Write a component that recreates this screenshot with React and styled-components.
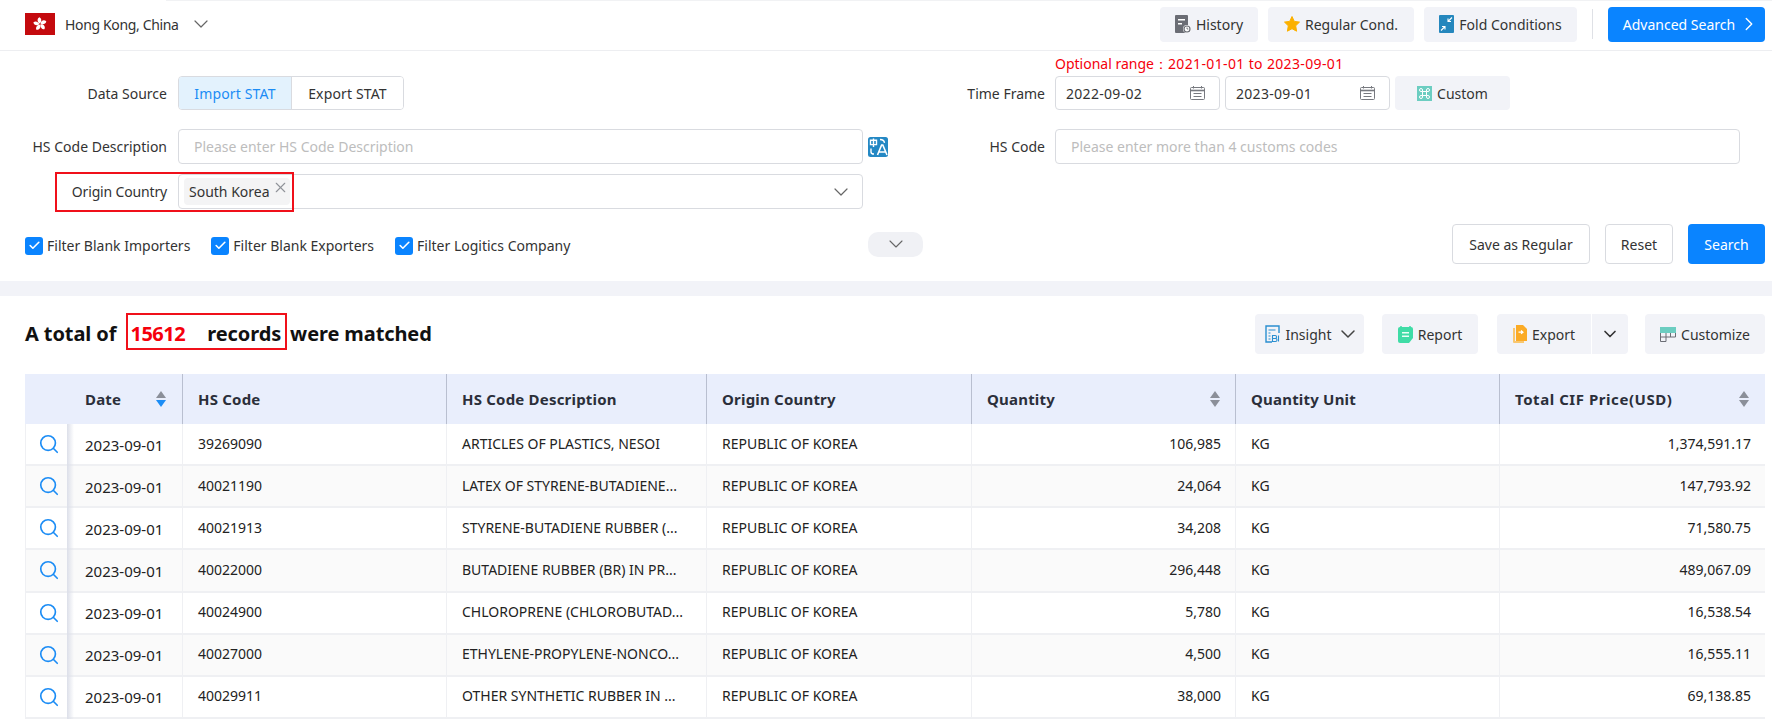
import React from "react";
import styled, { createGlobalStyle } from "styled-components";
import { ChevronDown, ChevronRight, Search as SearchIcon, X, Check } from "lucide-react";

const GlobalStyle = createGlobalStyle`
  html, body {
    margin: 0;
    padding: 0;
    background: #fff;
    font-family: "Noto Sans", "Open Sans", sans-serif;
    font-size: 14px;
    color: #222;
    overflow: hidden;
  }
  * { box-sizing: border-box; }
`;

const Page = styled.div`
  width: 1772px;
  height: 720px;
  overflow: hidden;
`;

/* top bar */
const TopBar = styled.div`
  height: 51px;
  display: flex;
  align-items: center;
  padding: 0 7px 2px 25px;
  border-bottom: 1px solid #edeef1;
  position: relative;
  &::before {
    content: "";
    position: absolute;
    top: 0;
    left: 166px;
    right: 0;
    height: 1px;
    background: #f1f2f4;
  }
`;

const Region = styled.div`
  display: flex;
  align-items: center;
  color: #333;
  flex: 1;
`;

const RegionName = styled.span`
  margin: 0 16px 0 10px;
  letter-spacing: -0.35px;
`;

const Caret = styled(ChevronDown)`
  margin: 0 -6px;
  flex: none;
  color: ${(p) => p.color || "#666"};
`;

const GreyButton = styled.div`
  height: ${(p) => p.$h || 35}px;
  width: ${(p) => p.$w}px;
  display: flex;
  align-items: center;
  justify-content: center;
  gap: 5px;
  background: #f2f3f8;
  border-radius: 4px;
  color: #333;
  white-space: nowrap;
`;

const TopActions = styled.div`
  display: flex;
  align-items: center;
  gap: 10px;
`;

const Divider = styled.div`
  width: 1px;
  height: 30px;
  background: #dfe1e6;
  margin: 0 5px;
`;

const PrimaryButton = styled.div`
  height: ${(p) => p.$h}px;
  width: ${(p) => p.$w}px;
  display: flex;
  align-items: center;
  justify-content: center;
  gap: 3px;
  padding-left: ${(p) => p.$pl || 0}px;
  background: #0a84ff;
  color: #fff;
  border-radius: 4px;
`;

/* filter panel */
const FilterPanel = styled.div`
  height: 230px;
  display: flex;
  flex-direction: column;
`;

const RangeHint = styled.div`
  height: 25px;
  padding: 4px 0 0 1055px;
  color: #f5000b;
  font-size: 14px;
  line-height: 18px;
`;

const RangeDates = styled.span`
  letter-spacing: 0.36px;
`;

const FormRow = styled.div`
  display: flex;
  align-items: center;
  height: ${(p) => p.$h}px;
  margin-bottom: ${(p) => p.$mb || 0}px;
  position: relative;
`;

const FieldLabel = styled.div`
  width: ${(p) => p.$w}px;
  margin-right: ${(p) => p.$mr}px;
  text-align: right;
  color: #333;
  white-space: nowrap;
  flex: none;
  letter-spacing: ${(p) => p.$ls || 0}px;
`;

const Segment = styled.div`
  display: flex;
  height: 34px;
  width: 226px;
  border: 1px solid #d9dbe0;
  border-radius: 4px;
  overflow: hidden;
`;

const SegmentItem = styled.div`
  display: flex;
  align-items: center;
  justify-content: center;
  width: ${(p) => p.$w}px;
  background: ${(p) => (p.$active ? "#e3f2fd" : "#fff")};
  color: ${(p) => (p.$active ? "#1b8cf5" : "#333")};
  border-left: ${(p) => (p.$active ? "none" : "1px solid #d9dbe0")};
  letter-spacing: 0.15px;
`;

const DateRow = styled.div`
  display: flex;
  gap: 5px;
`;

const DateBox = styled.div`
  width: 165px;
  height: 34px;
  border: 1px solid #d9dbe0;
  border-radius: 4px;
  display: flex;
  align-items: center;
  justify-content: space-between;
  padding: 0 14px 0 10px;
  color: #333;
  letter-spacing: 0.3px;
`;

const TextInput = styled.div`
  width: 685px;
  height: 35px;
  border: 1px solid #d9dbe0;
  border-radius: 4px;
  display: flex;
  align-items: center;
  padding-left: 15px;
  color: #bdbdbd;
`;

const SelectBox = styled.div`
  width: 685px;
  height: 35px;
  border: 1px solid #d9dbe0;
  border-radius: 4px;
  display: flex;
  align-items: center;
  justify-content: space-between;
  padding: 0 15px 0 5px;
  color: #666;
`;

const Tag = styled.div`
  width: 106px;
  height: 27px;
  background: #f4f4f5;
  border-radius: 4px;
  display: flex;
  padding-left: 5px;
  align-items: center;
  color: #333;
  position: relative;
  svg {
    position: absolute;
    right: 1px;
    top: 1px;
    color: #909399;
  }
`;

const TranslateSlot = styled.div`
  margin-left: 5px;
  width: 20px;
  height: 20px;
  flex: none;
`;

const LeftHalf = styled.div`
  width: 863px;
  display: flex;
  align-items: center;
  flex: none;
`;

const RedBox = styled.div`
  position: absolute;
  left: 55px;
  top: -2px;
  width: 239px;
  height: 40px;
  border: 2px solid #f0101a;
  pointer-events: none;
`;

const BottomRow = styled.div`
  display: flex;
  align-items: center;
  height: 40px;
  margin-top: 15px;
  padding: 0 7px 0 25px;
`;

const CheckGroup = styled.div`
  width: 843px;
  display: flex;
  gap: 21px;
  flex: none;
  margin-top: 3px;
`;

const CheckItem = styled.label`
  display: flex;
  align-items: center;
  gap: 4px;
  color: #333;
`;

const CheckBox = styled.span`
  width: 18px;
  height: 18px;
  background: #0a84ff;
  border-radius: 3px;
  display: flex;
  align-items: center;
  justify-content: center;
  color: #fff;
`;

const CollapsePill = styled.div`
  width: 55px;
  height: 25px;
  border-radius: 10px;
  background: #f0f1f5;
  display: flex;
  align-items: center;
  justify-content: center;
  color: #666;
`;

const FormActions = styled.div`
  margin-left: auto;
  display: flex;
  gap: 15px;
`;

const OutlineButton = styled.div`
  width: ${(p) => p.$w}px;
  height: 40px;
  border: 1px solid #d9dbe0;
  border-radius: 4px;
  display: flex;
  align-items: center;
  justify-content: center;
  color: #333;
`;

const Band = styled.div`
  height: 15px;
  background: #f2f3f8;
`;

/* results */
const Results = styled.div`
  padding: 18px 7px 0 25px;
`;

const ResultsHeader = styled.div`
  display: flex;
  align-items: center;
  justify-content: space-between;
  height: 40px;
  margin-bottom: 20px;
`;

const Total = styled.div`
  font-size: 20px;
  font-weight: 700;
  color: #111;
  white-space: pre;
  letter-spacing: -0.1px;
  margin-top: -2px;
`;

const Count = styled.span`
  color: #f5000b;
  letter-spacing: -0.5px;
  margin-right: 17px;
`;

const RecordBox = styled.span`
  display: inline-block;
  border: 2px solid #f0101a;
  height: 37px;
  line-height: 31px;
  margin: -8px 3px -8px 0;
  padding: 3px 4px 0 2px;
`;

const ResultActions = styled.div`
  display: flex;
  gap: 18px;
`;

const SplitButton = styled.div`
  display: flex;
  width: 131px;
  height: 40px;
  margin: 0 -1px 0 1px;
  background: #f2f3f8;
  border-radius: 4px;
  color: #333;
`;

const SplitMain = styled.div`
  width: 95px;
  display: flex;
  align-items: center;
  justify-content: center;
  gap: 5px;
  border-right: 1px solid #fff;
`;

const SplitArrow = styled.div`
  flex: 1;
  display: flex;
  align-items: center;
  justify-content: center;
`;

const InsightLabel = styled.span`
  margin-right: 5px;
`;

const Table = styled.table`
  width: 1740px;
  table-layout: fixed;
  border-collapse: separate;
  border-spacing: 0;
`;

const Th = styled.th`
  height: 50px;
  background: #e9eefc;
  font-size: 15px;
  font-weight: 700;
  text-align: left;
  color: #2b2f3a;
  padding: 0 15px;
  border-right: ${(p) => (p.$last ? "none" : "1px solid #b9bfd0")};
  position: relative;
  letter-spacing: ${(p) => p.$ls || 0.2}px;
`;

const DateHead = styled(Th)`
  padding: 0 16px 0 18px;
`;

const HeadInner = styled.div`
  display: flex;
  align-items: center;
  justify-content: space-between;
  padding-right: ${(p) => p.$pr || 0}px;
`;

const Td = styled.td`
  height: 42.15px;
  padding: 0 ${(p) => (p.$right ? 14 : 10)}px 2px 15px;
  text-align: ${(p) => (p.$right ? "right" : "left")};
  background: ${(p) => (p.$even ? "#fafafa" : "#fff")};
  border-bottom: 2px solid #eff0f3;
  border-right: ${(p) => (p.$last ? "none" : "1px solid #eff0f3")};
  color: #222;
  white-space: nowrap;
  overflow: hidden;
  text-overflow: ellipsis;
`;

const DateCell = styled(Td)`
  font-size: 15px;
  padding: 1px 5px 0 18px;
`;

const ActionCell = styled(Td)`
  position: relative;
  padding: 0 0 0 12px;
  border-left: 1px solid #eff0f3;
  border-right: none;
  overflow: visible;
  color: #1b8cf5;
  svg {
    display: block;
  }
  &::after {
    content: "";
    position: absolute;
    top: 0;
    bottom: -2px;
    left: 100%;
    width: 7px;
    background: linear-gradient(to right, #dcdfe9, rgba(255, 255, 255, 0));
  }
`;

const ActionHead = styled(Th)`
  padding: 0;
  border-right: none;
  &::after {
    content: "";
    position: absolute;
    top: 0;
    bottom: 0;
    left: 100%;
    width: 7px;
    background: linear-gradient(to right, #d3d7e4, rgba(233, 238, 252, 0));
  }
`;

const SortStack = styled.span`
  display: flex;
  flex-direction: column;
  gap: 2px;
  flex: none;
`;

const SortUp = styled.span`
  width: 0;
  height: 0;
  border-left: 5px solid transparent;
  border-right: 5px solid transparent;
  border-bottom: 7px solid #8b8f99;
`;

const SortDown = styled.span`
  width: 0;
  height: 0;
  border-left: 5px solid transparent;
  border-right: 5px solid transparent;
  border-top: 7px solid ${(p) => (p.$active ? "#1b8cf5" : "#8b8f99")};
`;

const FlagIcon = () => (
  <svg width="30" height="22" viewBox="0 0 30 22">
    <rect width="30" height="22" fill="#c40a0e" />
    <g fill="#fff" transform="translate(15 11)">
      {[0, 72, 144, 216, 288].map((a) => (
        <path key={a} transform={`rotate(${a})`} d="M0-.6C-3.2-1.6-3.2-5.6-.4-6.8C1.8-5.4 1.8-2.6 0-.6Z" />
      ))}
    </g>
  </svg>
);

const HistoryIcon = () => (
  <svg width="16" height="18" viewBox="0 0 16 18">
    <path d="M1 0h11a1 1 0 0 1 1 1v17H1a1 1 0 0 1-1-1V1a1 1 0 0 1 1-1z" fill="#6b6d75" />
    <path d="M3 4h7v1.6H3zM3 8h4v1.6H3z" fill="#fff" />
    <circle cx="12" cy="14" r="4" fill="#fff" />
    <circle cx="12" cy="14" r="3" fill="none" stroke="#6b6d75" strokeWidth="1.2" />
    <path d="M12 12.5V14h1.3" fill="none" stroke="#6b6d75" strokeWidth="0.9" />
  </svg>
);

const StarIcon = () => (
  <svg width="16" height="16" viewBox="0 0 16 16">
    <path d="M8 .5l2.3 4.9 5.2.7-3.8 3.7.9 5.4L8 12.7l-4.6 2.5.9-5.4L.5 6.1l5.2-.7z" fill="#fbb000" stroke="#fbb000" strokeLinejoin="round" />
  </svg>
);

const FoldIcon = () => (
  <svg width="15" height="18" viewBox="0 0 15 18">
    <rect width="15" height="18" rx="1" fill="#2587bd" />
    <path d="M13 2.5L9 6.5M9 3.5v3h3M2 15.5l4-4M6 14.5v-3H3" fill="none" stroke="#fff" strokeWidth="1.1" />
  </svg>
);

const TranslateIcon = () => (
  <svg width="20" height="20" viewBox="0 0 20 20">
    <rect width="20" height="20" rx="2.5" fill="#2488c4" />
    <path d="M2.5 3.2h6v4.4h-6zM5.5 1.5v8.4" fill="none" stroke="#fff" strokeWidth="1.4" />
    <path d="M3 11.5v3.4c0 1.4 1 2.1 3 2.1M12 2.5c2.6 0 4.2 1 4.5 3.4" fill="none" stroke="#fff" strokeWidth="1.4" />
    <path d="M9.5 18L13.6 8h1.2L19 18M11 15h6.3" fill="none" stroke="#fff" strokeWidth="1.6" />
  </svg>
);

const CalendarIcon = () => (
  <svg width="15" height="14" viewBox="0 0 15 14" fill="none" stroke="#77797f" strokeWidth="1">
    <rect x="0.5" y="1.5" width="14" height="12" rx="1" />
    <path d="M0.5 4.5h14" strokeWidth="1.6" />
    <path d="M3.5 0v2.5M11.5 0v2.5M3.5 7.5h8M3.5 10.5h8" />
  </svg>
);

const CustomIcon = () => (
  <svg width="15" height="15" viewBox="0 0 15 15">
    <rect width="15" height="15" fill="#6ccdc1" />
    <path d="M5.5 5.5h4v4h-4zM5.5 5.5H4a1.5 1.5 0 1 1 1.5-1.5zM9.5 5.5V4A1.5 1.5 0 1 1 11 5.5zM9.5 9.5H11A1.5 1.5 0 1 1 9.5 11zM5.5 9.5V11A1.5 1.5 0 1 1 4 9.5z" fill="none" stroke="#fff" strokeWidth="1" />
  </svg>
);

const InsightIcon = () => (
  <svg width="15" height="18" viewBox="0 0 15 18" fill="none" stroke="#2b8fd0">
    <path d="M14 8V1H1v16h6" strokeWidth="1.4" />
    <path d="M3.5 5h7M3.5 8h2M3.5 11h2M3.5 14h2" strokeWidth="1.2" />
    <path d="M7.5 10.5h2.6a1 1 0 0 1 0 3h-2.6zM7.5 13.5h3a1 1 0 0 1 0 3h-3zM13.5 10.5v6" strokeWidth="1.1" />
  </svg>
);

const ReportIcon = () => (
  <svg width="15" height="17" viewBox="0 0 15 17">
    <path d="M2 1h11a2 2 0 0 1 2 2v9l-4 5H2a2 2 0 0 1-2-2V3a2 2 0 0 1 2-2z" fill="#3fdca6" />
    <path d="M3 0v2M12 0v2" stroke="#3fdca6" strokeWidth="1.5" />
    <path d="M4 6h7v1.5H4zM4 9.5h7V11H4z" fill="#eafff6" />
  </svg>
);

const ExportIcon = () => (
  <svg width="14" height="18" viewBox="0 0 14 18">
    <path d="M0 3h2v13h9v2H1a1 1 0 0 1-1-1z" fill="#f9c76f" />
    <path d="M3 0h7l4 4v12H3z" fill="#fbab26" />
    <path d="M5.5 7.2h4M8 5.5l2 1.7-2 1.7" fill="none" stroke="#fff" strokeWidth="1.2" />
  </svg>
);

const CustomizeIcon = () => (
  <svg width="16" height="15" viewBox="0 0 16 15">
    <rect width="16" height="6" fill="#6ccdc1" />
    <path d="M.5 6v8.5h5.5V6M6 10h9.5V6M10.5 6v4M.5 10H6" fill="none" stroke="#6b6d75" strokeWidth="1" />
  </svg>
);

const rows = [
  ["39269090", "ARTICLES OF PLASTICS, NESOI", "106,985", "1,374,591.17"],
  ["40021190", "LATEX OF STYRENE-BUTADIENE...", "24,064", "147,793.92"],
  ["40021913", "STYRENE-BUTADIENE RUBBER (...", "34,208", "71,580.75"],
  ["40022000", "BUTADIENE RUBBER (BR) IN PR...", "296,448", "489,067.09"],
  ["40024900", "CHLOROPRENE (CHLOROBUTAD...", "5,780", "16,538.54"],
  ["40027000", "ETHYLENE-PROPYLENE-NONCO...", "4,500", "16,555.11"],
  ["40029911", "OTHER SYNTHETIC RUBBER IN ...", "38,000", "69,138.85"],
];

const Sort = ({ active }) => (
  <SortStack>
    <SortUp />
    <SortDown $active={active} />
  </SortStack>
);

export default function App() {
  return (
    <Page>
      <GlobalStyle />
      <TopBar>
        <Region>
          <FlagIcon />
          <RegionName>Hong Kong, China</RegionName>
          <Caret size={24} strokeWidth={1.2} />
        </Region>
        <TopActions>
          <GreyButton $w={98}><HistoryIcon />History</GreyButton>
          <GreyButton $w={146}><StarIcon />Regular Cond.</GreyButton>
          <GreyButton $w={153}><FoldIcon />Fold Conditions</GreyButton>
          <Divider />
          <PrimaryButton $w={157} $h={35} $pl={10}>Advanced Search<ChevronRight size={22} strokeWidth={1.5} /></PrimaryButton>
        </TopActions>
      </TopBar>

      <FilterPanel>
        <RangeHint>Optional range：<RangeDates>2021-01-01 to 2023-09-01</RangeDates></RangeHint>
        <FormRow $h={34} $mb={19}>
          <LeftHalf>
            <FieldLabel $w={167} $mr={11}>Data Source</FieldLabel>
            <Segment>
              <SegmentItem $active $w={113}>Import STAT</SegmentItem>
              <SegmentItem $w={113}>Export STAT</SegmentItem>
            </Segment>
          </LeftHalf>
          <FieldLabel $w={182} $mr={10}>Time Frame</FieldLabel>
          <DateRow>
            <DateBox>2022-09-02<CalendarIcon /></DateBox>
            <DateBox>2023-09-01<CalendarIcon /></DateBox>
            <GreyButton $w={115} $h={34}><CustomIcon />Custom</GreyButton>
          </DateRow>
        </FormRow>
        <FormRow $h={35} $mb={10}>
          <LeftHalf>
            <FieldLabel $w={167} $mr={11}>HS Code Description</FieldLabel>
            <TextInput>Please enter HS Code Description</TextInput>
          </LeftHalf>
          <TranslateSlot><TranslateIcon /></TranslateSlot>
          <FieldLabel $w={157} $mr={10}>HS Code</FieldLabel>
          <TextInput>Please enter more than 4 customs codes</TextInput>
        </FormRow>
        <FormRow $h={35}>
          <LeftHalf>
            <FieldLabel $w={167} $mr={11} $ls={-0.16}>Origin Country</FieldLabel>
            <SelectBox>
              <Tag>South Korea<X size={17} strokeWidth={1.6} /></Tag>
              <Caret size={24} strokeWidth={1.2} />
            </SelectBox>
          </LeftHalf>
          <RedBox />
        </FormRow>
        <BottomRow>
          <CheckGroup>
            {["Filter Blank Importers", "Filter Blank Exporters", "Filter Logitics Company"].map((t) => (
              <CheckItem key={t}>
                <CheckBox><Check size={13} strokeWidth={3} /></CheckBox>
                {t}
              </CheckItem>
            ))}
          </CheckGroup>
          <CollapsePill><Caret size={24} strokeWidth={1.1} /></CollapsePill>
          <FormActions>
            <OutlineButton $w={138}>Save as Regular</OutlineButton>
            <OutlineButton $w={68}>Reset</OutlineButton>
            <PrimaryButton $w={77} $h={40}>Search</PrimaryButton>
          </FormActions>
        </BottomRow>
      </FilterPanel>

      <Band />

      <Results>
        <ResultsHeader>
          <Total>A total of  <RecordBox><Count>15612</Count> records</RecordBox>were matched</Total>
          <ResultActions>
            <GreyButton $w={109} $h={40}><InsightIcon /><InsightLabel>Insight</InsightLabel><Caret size={24} strokeWidth={1.5} color="#444" /></GreyButton>
            <GreyButton $w={96} $h={40}><ReportIcon />Report</GreyButton>
            <SplitButton>
              <SplitMain><ExportIcon />Export</SplitMain>
              <SplitArrow><ChevronDown size={20} strokeWidth={2} /></SplitArrow>
            </SplitButton>
            <GreyButton $w={120} $h={40}><CustomizeIcon />Customize</GreyButton>
          </ResultActions>
        </ResultsHeader>

        <Table>
          <colgroup>
            <col style={{ width: 42 }} />
            <col style={{ width: 116 }} />
            <col style={{ width: 264 }} />
            <col style={{ width: 260 }} />
            <col style={{ width: 265 }} />
            <col style={{ width: 264 }} />
            <col style={{ width: 264 }} />
            <col style={{ width: 265 }} />
          </colgroup>
          <thead>
            <tr>
              <ActionHead />
              <DateHead><HeadInner>Date<Sort active /></HeadInner></DateHead>
              <Th>HS Code</Th>
              <Th>HS Code Description</Th>
              <Th>Origin Country</Th>
              <Th><HeadInner>Quantity<Sort /></HeadInner></Th>
              <Th>Quantity Unit</Th>
              <Th $last $ls={0.55}><HeadInner $pr={1}>Total CIF Price(USD)<Sort /></HeadInner></Th>
            </tr>
          </thead>
          <tbody>
            {rows.map((r, i) => (
              <tr key={r[0]}>
                <ActionCell $even={i % 2 === 1}><SearchIcon size={22} strokeWidth={1.8} /></ActionCell>
                <DateCell $even={i % 2 === 1}>2023-09-01</DateCell>
                <Td $even={i % 2 === 1}>{r[0]}</Td>
                <Td $even={i % 2 === 1}>{r[1]}</Td>
                <Td $even={i % 2 === 1}>REPUBLIC OF KOREA</Td>
                <Td $even={i % 2 === 1} $right>{r[2]}</Td>
                <Td $even={i % 2 === 1}>KG</Td>
                <Td $even={i % 2 === 1} $right $last>{r[3]}</Td>
              </tr>
            ))}
          </tbody>
        </Table>
      </Results>
    </Page>
  );
}
